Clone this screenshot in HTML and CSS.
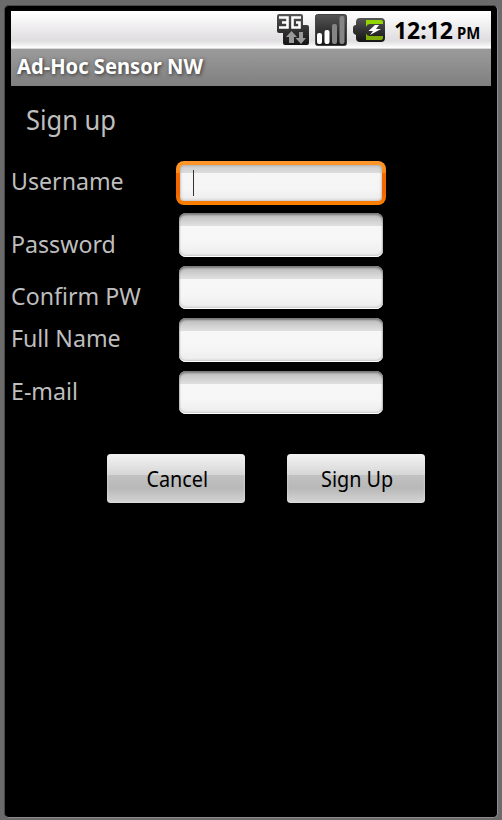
FILE: index.html
```html
<!DOCTYPE html>
<html lang="en">
<head>
<meta charset="utf-8">
<title>Ad-Hoc Sensor NW</title>
<link rel="stylesheet" href="styles.css">
</head>
<body>
<main class="device">
  <header class="status">
    <svg class="icon-3g" width="32" height="32" viewBox="0 0 32 32">
      <defs>
        <linearGradient id="dark" x1="0" y1="0" x2="0" y2="1"><stop offset="0" stop-color="#555"/><stop offset=".5" stop-color="#333"/><stop offset="1" stop-color="#151515"/></linearGradient>
      </defs>
      <path d="M2 0H24Q26 0 26 2V11H30Q32 11 32 13V29Q32 31 30 31H8Q6 31 6 29V19H2Q0 19 0 17V2Q0 0 2 0Z" fill="url(#dark)"/>
      <path d="M2 3.500H10.500V13.500H2M5 8.500H10.500M24 3.500H15.500V13.500H22.500V8.500H19" fill="none" stroke="#fff" stroke-width="2.600"/>
      <path d="M14.500 17L20 23H17V29H12V23H9ZM22 18H26V24H29L24 30L18.500 24H22Z" fill="#999"/>
    </svg>
    <svg class="icon-signal" width="32" height="32" viewBox="0 0 32 32">
      <rect x=".5" y=".5" width="31" height="31" rx="2" fill="url(#dark)" stroke="#444"/>
      <rect x="2" y="19" width="5" height="11" rx="2" fill="#fff"/>
      <rect x="9.500" y="16" width="5" height="14" rx="2" fill="#fff"/>
      <rect x="17" y="10" width="5" height="20" rx="2" fill="#858585"/>
      <rect x="24.500" y="2" width="5" height="28" rx="2" fill="#858585"/>
    </svg>
    <svg class="icon-battery" width="32" height="24" viewBox="0 0 32 24">
      <path d="M7 0H28Q32 0 32 4V20Q32 24 28 24H7Q3 24 3 20V17Q0 16 0 14V10Q0 7 3 7V4Q3 0 7 0Z" fill="url(#dark)"/>
      <path d="M13 2H28Q30 2 30 4V6H17Q14 6 13 9Z" fill="#93d500"/>
      <path d="M13 15Q14 18 17 18H30V20Q30 22 28 22H13Z" fill="#80ae08"/>
      <path d="M22 7L15.500 13H20L17 17L28 11H23L26 7Z" fill="#fff"/>
    </svg>
    <span class="time">12:12</span><span class="meridiem">PM</span>
  </header>
  <div class="titlebar"><span class="app-title">Ad-Hoc Sensor NW</span></div>
  <h1 class="heading">Sign up</h1>
  <section class="form">
    <div class="row username"><span class="label">Username</span><div class="field focused"><i class="caret"></i></div></div>
    <div class="row password"><span class="label">Password</span><div class="field"></div></div>
    <div class="row confirm"><span class="label">Confirm PW</span><div class="field"></div></div>
    <div class="row fullname"><span class="label">Full Name</span><div class="field"></div></div>
    <div class="row email"><span class="label">E-mail</span><div class="field"></div></div>
  </section>
  <div class="actions"><button><span>Cancel</span></button><button><span>Sign Up</span></button></div>
</main>
</body>
</html>
```
FILE: styles.css
```css
* { box-sizing: border-box; }
body {
  margin: 0;
  height: 820px;
  padding: 5px 4px 2px 4px;
  overflow: hidden;
  background: #6b6b6b;
  font-family: "Noto Sans", "Open Sans", sans-serif;
}
.device {
  height: 813px;
  padding: 5px 6px;
  background: #000;
  border: 1px solid #484848;
  border-right-color: #8c8c8c;
  border-bottom-color: #8c8c8c;
  border-radius: 5px;
}
.status {
  display: flex;
  height: 38px;
  padding: 3px 9px 0 0;
  justify-content: flex-end;
  align-items: flex-start;
  background: linear-gradient(#fff 0, #f6f5f6 25%, #dfdddf 78%, #fbfbfb 95%, #fff 97%, #bbb 100%);
}
.icon-signal { margin-left: 6px; }
.icon-battery { margin: 4px 0 0 6px; }
.time {
  margin-left: 9px;
  font-size: 23px;
  line-height: 32px;
  font-weight: 700;
}
.meridiem {
  width: 25px;
  margin-left: 4px;
  font-size: 16px;
  line-height: 38px;
  font-weight: 700;
  transform: scaleX(.93);
  transform-origin: left;
}
.titlebar {
  height: 37px;
  padding-left: 6px;
  background: linear-gradient(#9b9b9b, #7f7f7f);
}
.app-title {
  display: inline-block;
  color: #fff;
  font-size: 21px;
  line-height: 35px;
  font-weight: 700;
  text-shadow: 1px 1px 4px #333;
  transform: scaleX(.96);
  transform-origin: left;
}
.heading {
  margin: 16px 0 0 15px;
  height: 59px;
  color: #bebebe;
  font-size: 28px;
  line-height: 34px;
  font-weight: 400;
  transform: scaleX(.91);
  transform-origin: left;
}
.form { display: flex; flex-direction: column; }
.row { display: flex; align-items: flex-start; color: #bebebe; }
.label {
  width: 168px;
  font-size: 24px;
  line-height: 30px;
  white-space: nowrap;
  transform: scaleX(.965);
  transform-origin: left;
}
.username { height: 52px; }
.password, .fullname { height: 53px; }
.confirm { height: 52px; }
.email { height: 83px; }
.username .label { padding-top: 5px; }
.password .label { padding-top: 16px; }
.confirm .label { padding-top: 15px; }
.fullname .label { padding-top: 5px; }
.email .label { padding-top: 5px; }
.field {
  width: 204px;
  height: 44px;
  border-radius: 7px;
  background: linear-gradient(#b8b8b8 0, #dedede 12px, #dedede 13px, #f7f7f7 13px, #f6f6f6 28px, #ececec 100%);
  box-shadow: inset 0 2px 2px #7b7b7b, inset 0 -1px #fff, inset 0 -2px 2px #c9c9c9, inset 0 0 2px #aaa;
}
.confirm .field, .email .field { height: 43px; }
.focused {
  width: 210px;
  margin-left: -3px;
  padding: 4px;
  border-radius: 8px;
  background: linear-gradient(#ff982e 0, #ff8b19 12px, #f56b00 12px, #f06500 32px, #ff8200 44px);
  box-shadow: none;
}
.caret {
  display: block;
  height: 36px;
  border-radius: 4px;
  background: linear-gradient(#333, #333) 13px 5px / 1px 26px no-repeat, linear-gradient(#ccc 0, #ddd 8px, #f6f6f6 8px, #f5f5f5 24px, #ebebeb 100%);
  box-shadow: inset 0 0 3px #999;
}
.actions { display: flex; gap: 42px; padding-left: 96px; }
.actions button {
  width: 138px;
  height: 49px;
  padding: 0 0 1px 2px;
  border: 0;
  border-radius: 4px;
  background: linear-gradient(#f4f4f4 0, #d6d6d6 21px, #c2c2c2 21px, #b8b8b8 34px, #d5d5d5 49px);
  box-shadow: inset 0 0 2px #eee;
  color: #000;
  font: 22px/48px "Noto Sans", "Open Sans", sans-serif;
}
.actions span { display: inline-block; transform: scaleX(.9); }
```
